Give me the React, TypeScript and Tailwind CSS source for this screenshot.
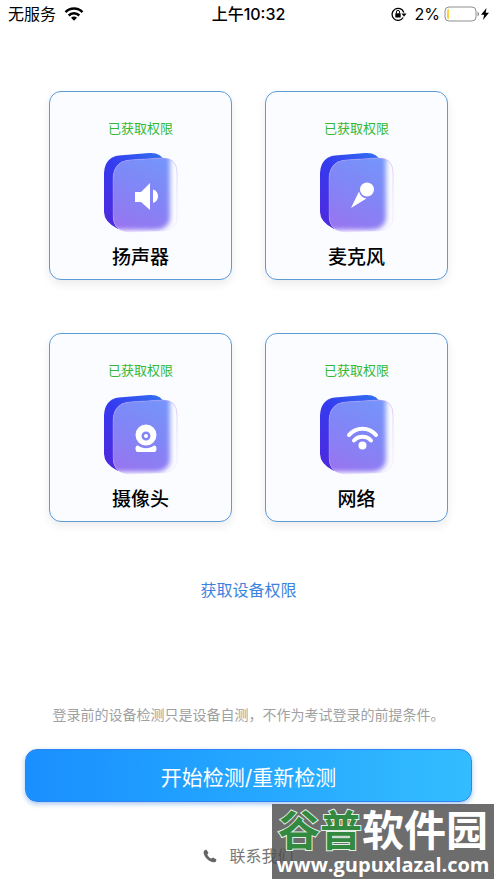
import type { ReactNode } from "react";

type Device = {
  id: string;
  name: string;
  glyph: ReactNode;
};

const devices: Device[] = [
  {
    id: "speaker",
    name: "扬声器",
    glyph: (
      <>
        <path d="M32 40h6l9-9v27l-9-8h-6z" />
        <path d="M50 37.5c3.300 1 5 3.500 5 6.800s-1.700 5.700-5 6.700z" />
      </>
    ),
  },
  {
    id: "microphone",
    name: "麦克风",
    glyph: (
      <>
        <circle cx="48" cy="37.500" r="7" />
        <path d="M40 39.500c1 4 3.500 6.500 7.500 7L32 56z" />
      </>
    ),
  },
  {
    id: "camera",
    name: "摄像头",
    glyph: (
      <>
        <path
          fillRule="evenodd"
          d="M43 30.500a10.500 10.500 0 1 0 0 21a10.500 10.500 0 0 0 0-21zM43 37.500a4.500 4.500 0 1 1 0 9a4.500 4.500 0 0 1 0-9z"
        />
        <circle cx="43" cy="42" r="2" />
        <path d="M35 51.500c5 3.500 11 3.500 16 0 2 0 2.500 1.500 2.500 3s-.5 3.500-2 3.500h-17c-1.500 0-2-2-2-3.500s.5-3 2.500-3z" />
      </>
    ),
  },
  {
    id: "network",
    name: "网络",
    glyph: (
      <>
        <g fill="none" stroke="#fff" strokeWidth="4" strokeLinecap="round">
          <path d="M30 41c7-8.500 20-8.500 27 0" />
          <path d="M35 46.500c4.500-5 12.500-5 17 0" />
        </g>
        <circle cx="43.500" cy="51.500" r="4" />
      </>
    ),
  },
];

const GLASS = "M27 8L60 6Q74 6 74 21V65Q74 78 60 79L25 80Q10 79 10 63V26Q11 9 27 8Z";

function DeviceIcon({ id, glyph }: { id: string; glyph: ReactNode }) {
  return (
    <svg viewBox="0 0 76 84" className="h-[84px] w-[76px]" aria-hidden="true">
      <defs>
        <linearGradient id={`${id}-back`} x1="1" y1="0" x2="0" y2="1">
          <stop offset="0" stopColor="#3274f0" />
          <stop offset="0.5" stopColor="#343bf0" />
          <stop offset="1" stopColor="#5127dc" />
        </linearGradient>
        <linearGradient id={`${id}-face`} x1="0.7" y1="0" x2="0.3" y2="1">
          <stop offset="0" stopColor="#7397fb" />
          <stop offset="0.5" stopColor="#8186f6" />
          <stop offset="1" stopColor="#9874f0" />
        </linearGradient>
        <linearGradient id={`${id}-edge`} x1="0" y1="0" x2="0" y2="1">
          <stop offset="0" stopColor="#b99af5" stopOpacity="0.5" />
          <stop offset="1" stopColor="#d9c6fa" stopOpacity="0.2" />
        </linearGradient>
        <clipPath id={`${id}-glass`}>
          <path d={GLASS} />
        </clipPath>
        <filter id={`${id}-soft`} x="-20%" y="-20%" width="140%" height="140%">
          <feGaussianBlur stdDeviation="2.5" />
        </filter>
      </defs>
      <path
        d="M16 3.500L46 1Q58 0 62 10V63Q61 74 49 75L15 77Q1 70 1 60V21Q2 5 16 3.500Z"
        fill={`url(#${id}-back)`}
      />
      <path d={GLASS} fill="#fcfcff" />
      <g clipPath={`url(#${id}-glass)`}>
        <path
          d="M-4-8H67V66Q66 77 53 78H-4Z"
          fill={`url(#${id}-face)`}
          filter={`url(#${id}-soft)`}
        />
      </g>
      <path d={GLASS} fill="none" stroke={`url(#${id}-edge)`} />
      <g fill="#fff">{glyph}</g>
    </svg>
  );
}

function DeviceCard({ device }: { device: Device }) {
  return (
    <li className="flex h-[189px] flex-col items-center rounded-xl border border-[#5a9bd8] bg-[#fafcff] pt-[26px] shadow-[0_4px_10px_rgba(0,0,0,0.08)]">
      <p className="text-[13px] leading-5 text-[#35b835]">已获取权限</p>
      <div className="mt-[14px]">
        <DeviceIcon id={device.id} glyph={device.glyph} />
      </div>
      <h2 className="mt-2 text-[19px] leading-7 font-medium text-black">{device.name}</h2>
    </li>
  );
}

function WifiIcon() {
  return (
    <svg viewBox="0 0 20 14" className="h-[14px] w-5" aria-hidden="true">
      <g fill="none" stroke="#000" strokeWidth="2.500">
        <path d="M1.500 5.200c4.800-4.800 12.200-4.800 17 0" />
        <path d="M4.700 8.500c3-3 7.600-3 10.600 0" />
      </g>
      <path d="M7 10.800c1.700-1.700 4.300-1.700 6 0L10 13.800z" />
    </svg>
  );
}

function StatusBar() {
  return (
    <header className="grid h-7 grid-cols-3 items-center px-2 text-base text-black">
      <div className="flex items-center gap-2">
        <span>无服务</span>
        <WifiIcon />
      </div>
      <time className="text-center font-medium">上午10:32</time>
      <div className="flex items-center justify-end">
        <svg viewBox="0 0 16 14" className="mr-2 h-[14px] w-4" aria-hidden="true">
          <path
            d="M12.200 10.500A6 6 0 1 1 12.800 5.500"
            fill="none"
            stroke="#000"
            strokeWidth="1.300"
          />
          <path d="M10.500 6.500h5l-2.500 3.200z" />
          <rect x="4.300" y="6.200" width="5.400" height="4.300" rx="0.600" />
          <path d="M5.400 6.500V5a1.600 1.600 0 0 1 3.200 0v1.500" fill="none" stroke="#000" />
        </svg>
        <span className="mr-1">2%</span>
        <svg viewBox="0 0 36 16" className="h-4 w-9" aria-hidden="true">
          <rect x="1" y="1" width="31" height="14" rx="4" fill="#fff" stroke="#8f8f8f" />
          <path d="M5 3v10H4.500Q3 13 3 11V5Q3 3 4.500 3z" fill="#fccf45" />
          <path d="M33.500 5.500c2 .8 2 4.200 0 5z" fill="#8f8f8f" />
        </svg>
        <svg viewBox="0 0 8 12" className="ml-px h-3 w-2" aria-hidden="true">
          <path d="M5.500 0L0 6.800h3.200L2 12l6-7.200H4.700z" />
        </svg>
      </div>
    </header>
  );
}

function Watermark() {
  return (
    <div className="absolute right-[3px] bottom-1 flex h-[75px] w-[222px] flex-col items-center bg-[#484848]/80 whitespace-nowrap">
      <p className="pt-1 text-[42px] leading-[46px] font-bold text-white">
        <span className="text-[#328940] [-webkit-text-stroke:2px_#e4efe4] [paint-order:stroke_fill]">
          谷普
        </span>
        软件园
      </p>
      <p className="font-['Open_Sans'] text-[20px] leading-[22px] font-bold text-white">
        www.gupuxlazal.com
      </p>
    </div>
  );
}

export default function App() {
  return (
    <div className="relative flex min-h-screen flex-col bg-white font-['Inter','Noto_Sans_CJK_SC',sans-serif]">
      <StatusBar />
      <main className="flex grow flex-col">
        <ul className="mt-[63px] grid grid-cols-2 gap-x-[33px] gap-y-[53px] px-[49px]">
          {devices.map((device) => (
            <DeviceCard key={device.id} device={device} />
          ))}
        </ul>
        <button type="button" className="mt-14 self-center text-base text-[#3c83e0]">
          获取设备权限
        </button>
        <p className="mt-auto text-center text-[14px] leading-5 text-[#a0a0a0]">
          登录前的设备检测只是设备自测，不作为考试登录的前提条件。
        </p>
        <div className="mt-6 px-[25px]">
          <button
            type="button"
            className="h-[53px] w-full rounded-xl border border-[#2f83f2] bg-linear-to-r from-[#1a8fff] to-[#33bdff] pt-1 text-[21px] text-white shadow-[0_2px_5px_rgba(30,110,210,0.4)]"
          >
            开始检测/重新检测
          </button>
        </div>
      </main>
      <footer className="flex justify-center pt-[42px] pb-[15px]">
        <a href="#contact" className="flex items-center gap-3 text-base text-[#777]">
          <svg viewBox="0 0 14 14" className="h-[14px] w-[14px]" aria-hidden="true">
            <path
              d="M1 1.800L3.300.5 5.500 3.800 4.300 5.400c.7 1.800 2.200 3.300 4 4.200l1.800-1 3.400 1.800-.8 2.300c-1.500.8-3.500.7-5.500-.4C4.200 10.700 2 8.300 1 5.500.5 4 .5 2.800 1 1.800z"
              fill="#666"
            />
          </svg>
          联系我们
        </a>
      </footer>
      <Watermark />
    </div>
  );
}
